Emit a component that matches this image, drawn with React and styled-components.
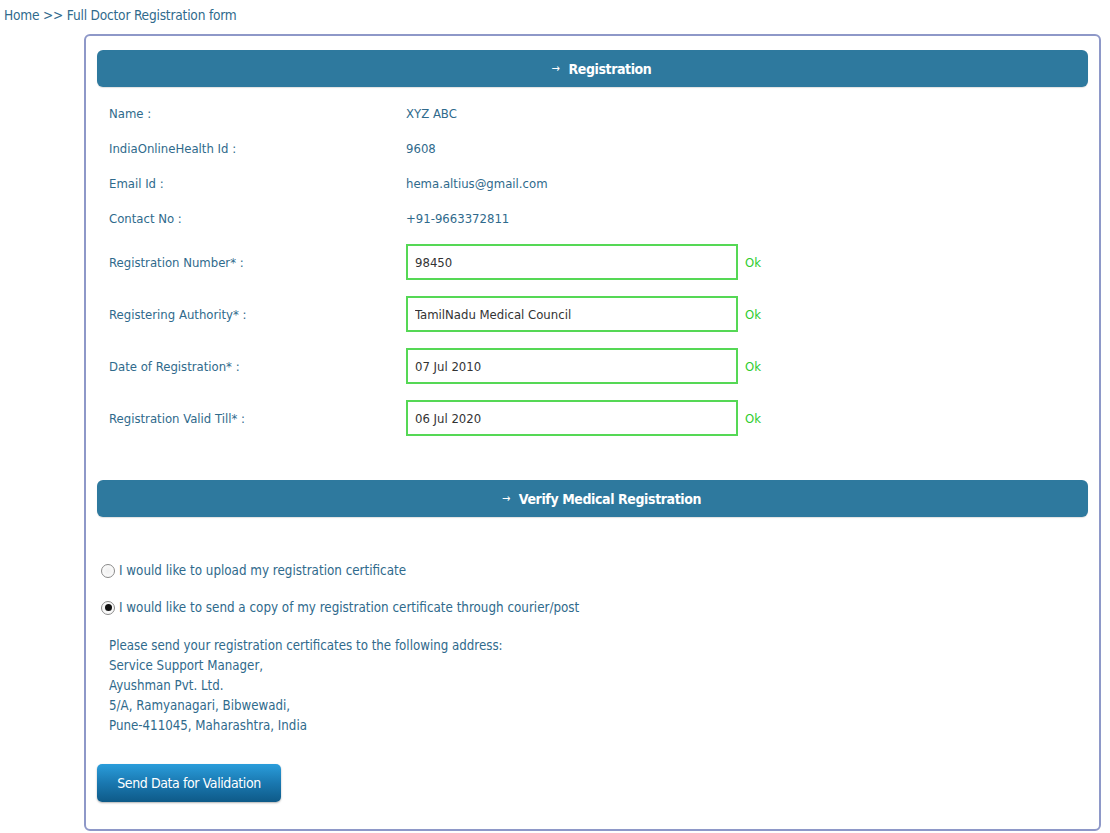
import React from "react";
import styled, { createGlobalStyle } from "styled-components";

const textBlue = "#2f6a8c";

const GlobalStyle = createGlobalStyle`
  body {
    margin: 0;
    background: #ffffff;
    font-family: "DejaVu Sans Condensed", "DejaVu Sans", sans-serif;
    color: ${textBlue};
  }
`;

const Page = styled.div`
  width: 1110px;
  height: 833px;
  padding: 6px 0 0 4px;
  box-sizing: border-box;
`;

const Breadcrumb = styled.div`
  font-size: 13.6px;
  line-height: 18px;
  height: 28px;
  letter-spacing: -0.2px;
`;

const Panel = styled.div`
  margin-left: 80px;
  width: 1017px;
  height: 797px;
  box-sizing: border-box;
  border: 2px solid #8e98c8;
  border-radius: 6px;
  padding: 14px 11px 0 11px;
`;

const SectionBar = styled.div`
  height: 37px;
  background: #2e799e;
  border-radius: 6px;
  color: #ffffff;
  font-weight: bold;
  font-size: 14px;
  letter-spacing: -0.4px;
  display: flex;
  align-items: center;
  justify-content: center;
  gap: 9px;
  padding-left: 18px;
  box-shadow: 0 1px 1px rgba(0, 0, 0, 0.12);
`;

const Arrow = styled.span`
  font-weight: normal;
  font-size: 11px;
`;

const InfoGrid = styled.div`
  display: grid;
  grid-template-columns: 297px 332px auto;
  padding: 0 0 0 12px;
  margin-top: 9px;
  align-items: center;
  font-size: 13px;
`;

const InfoCell = styled.div`
  height: 35px;
  display: flex;
  align-items: center;
`;

const FieldCell = styled.div`
  height: 52px;
  display: flex;
  align-items: center;
`;

const Field = styled.input`
  width: 332px;
  height: 36px;
  box-sizing: border-box;
  border: 2px solid #55d855;
  padding: 0 7px;
  font-family: inherit;
  font-size: 13px;
  color: #333333;
  outline: none;
`;

const OkText = styled.span`
  color: #2fcc2f;
  font-size: 13px;
  margin-left: 7px;
`;

const Spacer = styled.div`
  height: ${(p) => p.h}px;
`;

const RadioRow = styled.label`
  display: flex;
  align-items: center;
  gap: 4px;
  height: 37px;
  font-size: 13.3px;
  padding-left: 4px;
`;

const RadioDot = styled.span`
  width: 14px;
  height: 14px;
  border-radius: 50%;
  border: 1px solid #8a8a8a;
  box-sizing: border-box;
  background: radial-gradient(circle, #f0f0f0 0%, #ffffff 100%);
  display: inline-flex;
  align-items: center;
  justify-content: center;
  &::after {
    content: "";
    width: 7px;
    height: 7px;
    border-radius: 50%;
    background: #111111;
    display: ${(p) => (p.checked ? "block" : "none")};
  }
`;

const Address = styled.div`
  padding-left: 12px;
  margin-top: 10px;
  font-size: 13.2px;
  line-height: 20px;
`;

const SendButton = styled.button`
  margin-top: 28px;
  width: 184px;
  height: 38px;
  border: none;
  border-radius: 5px;
  background: linear-gradient(to bottom, #2a9ddb 0%, #1a78b0 50%, #0e5a88 100%);
  color: #ffffff;
  font-family: inherit;
  font-size: 14px;
  letter-spacing: -0.4px;
  box-shadow: 0 1px 2px rgba(0, 0, 0, 0.3);
  cursor: pointer;
`;

const info = [
  ["Name :", "XYZ ABC"],
  ["IndiaOnlineHealth Id :", "9608"],
  ["Email Id :", "hema.altius@gmail.com"],
  ["Contact No :", "+91-9663372811"],
];

const fields = [
  ["Registration Number* :", "98450"],
  ["Registering Authority* :", "TamilNadu Medical Council"],
  ["Date of Registration* :", "07 Jul 2010"],
  ["Registration Valid Till* :", "06 Jul 2020"],
];

export default function App() {
  return (
    <Page>
      <GlobalStyle />
      <Breadcrumb>Home &gt;&gt; Full Doctor Registration form</Breadcrumb>
      <Panel>
        <SectionBar>
          <Arrow>→</Arrow>Registration
        </SectionBar>
        <InfoGrid>
          {info.map(([label, value]) => (
            <React.Fragment key={label}>
              <InfoCell>{label}</InfoCell>
              <InfoCell>{value}</InfoCell>
              <InfoCell />
            </React.Fragment>
          ))}
          {fields.map(([label, value]) => (
            <React.Fragment key={label}>
              <FieldCell>{label}</FieldCell>
              <FieldCell>
                <Field defaultValue={value} />
              </FieldCell>
              <FieldCell>
                <OkText>Ok</OkText>
              </FieldCell>
            </React.Fragment>
          ))}
        </InfoGrid>
        <Spacer h={36} />
        <SectionBar>
          <Arrow>→</Arrow>Verify Medical Registration
        </SectionBar>
        <Spacer h={35} />
        <RadioRow>
          <RadioDot />I would like to upload my registration certificate
        </RadioRow>
        <RadioRow>
          <RadioDot checked />I would like to send a copy of my registration certificate through courier/post
        </RadioRow>
        <Address>
          Please send your registration certificates to the following address:
          <br />
          Service Support Manager,
          <br />
          Ayushman Pvt. Ltd.
          <br />
          5/A, Ramyanagari, Bibwewadi,
          <br />
          Pune-411045, Maharashtra, India
        </Address>
        <SendButton>Send Data for Validation</SendButton>
      </Panel>
    </Page>
  );
}
